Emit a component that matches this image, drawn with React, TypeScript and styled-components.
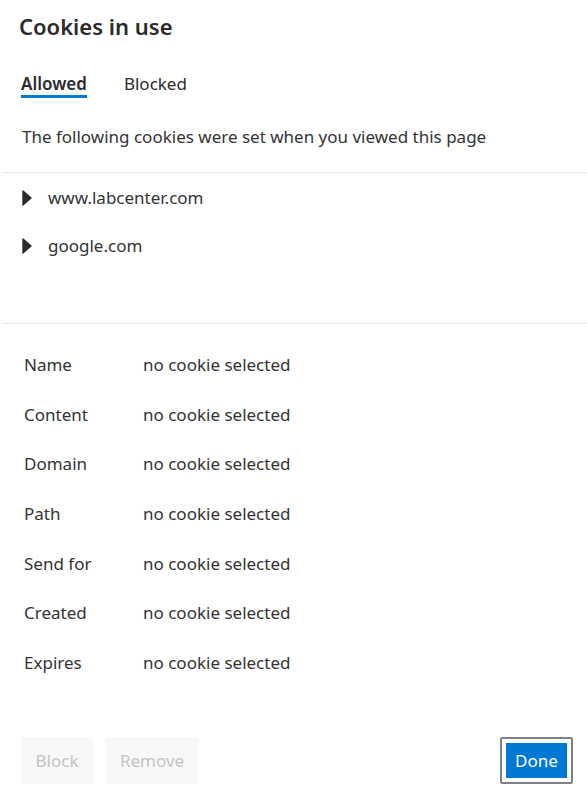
import styled, { createGlobalStyle } from 'styled-components';

const rows = ['Name', 'Content', 'Domain', 'Path', 'Send for', 'Created', 'Expires'];
const sites = ['www.labcenter.com', 'google.com'];

const GlobalStyle = createGlobalStyle`
    body {
        margin: 0;
        background: #ffffff;
        font-family: 'Noto Sans', 'Open Sans', sans-serif;
        color: #333333;
    }
`;

const App = () => {
    return (
        <Dialog>
            <GlobalStyle />
            <Title>Cookies in use</Title>
            <Tabs>
                <Tab $active>Allowed</Tab>
                <Tab>Blocked</Tab>
            </Tabs>
            <Description>
                The following cookies were set when you viewed this page
            </Description>
            <Divider />
            <Tree>
                {sites.map((site) => (
                    <TreeItem key={site}>
                        <Caret viewBox="0 0 10 16">
                            <path
                                d="M1 1 L9 8 L1 15 Z"
                                fill="#2b2b2b"
                                stroke="#2b2b2b"
                                strokeWidth="1.4"
                                strokeLinejoin="round"
                            />
                        </Caret>
                        {site}
                    </TreeItem>
                ))}
            </Tree>
            <Divider />
            <Details>
                {rows.map((row) => (
                    <DetailRow key={row}>
                        <Label>{row}</Label>
                        <Value>no cookie selected</Value>
                    </DetailRow>
                ))}
            </Details>
            <Footer>
                <ButtonGroup>
                    <GhostButton disabled $width={72}>
                        Block
                    </GhostButton>
                    <GhostButton disabled $width={92}>
                        Remove
                    </GhostButton>
                </ButtonGroup>
                <FocusRing>
                    <PrimaryButton>Done</PrimaryButton>
                </FocusRing>
            </Footer>
        </Dialog>
    );
};

interface TabProps {
    $active?: boolean;
}

interface GhostButtonProps {
    $width: number;
}

const Dialog = styled.div`
    display: flex;
    flex-direction: column;
    width: 587px;
    height: 807px;
    box-sizing: border-box;
`;

const Title = styled.div`
    font-size: 22px;
    font-weight: 600;
    line-height: 30px;
    color: #2b2b2b;
    padding: 11px 0 1px 19px;
`;

const Tabs = styled.div`
    display: flex;
    gap: 37px;
    padding: 31px 0 0 21px;
`;

const Tab = styled.div<TabProps>`
    font-size: 17px;
    font-weight: ${(props) => (props.$active ? 600 : 400)};
    color: #2b2b2b;
    line-height: 22px;
    border-bottom: 3px solid
        ${(props) => (props.$active ? '#0078d4' : 'transparent')};
`;

const Description = styled.div`
    font-size: 17px;
    line-height: 22px;
    padding: 28px 0 0 22px;
    height: 46px;
`;

const Divider = styled.div`
    height: 1px;
    margin-left: 3px;
    background: #e5e5e5;
`;

const Tree = styled.div`
    display: flex;
    flex-direction: column;
    gap: 26px;
    padding: 14px 0 0 22px;
    height: 150px;
    box-sizing: border-box;
`;

const TreeItem = styled.div`
    display: flex;
    align-items: center;
    font-size: 17px;
    line-height: 22px;
`;

const Caret = styled.svg`
    width: 10px;
    height: 16px;
    margin-right: 16px;
`;

const Details = styled.div`
    display: flex;
    flex-direction: column;
    gap: 27.67px;
    padding: 30px 0 0 24px;
    height: 413px;
    box-sizing: border-box;
`;

const DetailRow = styled.div`
    display: flex;
    font-size: 17px;
    line-height: 22px;
`;

const Label = styled.div`
    width: 119px;
`;

const Value = styled.div``;

const Footer = styled.div`
    display: flex;
    justify-content: space-between;
    align-items: center;
    padding: 0 14px 0 21px;
`;

const ButtonGroup = styled.div`
    display: flex;
    gap: 13px;
`;

const GhostButton = styled.button<GhostButtonProps>`
    width: ${(props) => props.$width}px;
    height: 47px;
    padding: 0;
    border: none;
    border-radius: 2px;
    background: #f8f8f8;
    color: #c4c4c4;
    font-family: inherit;
    font-size: 17px;
`;

const FocusRing = styled.div`
    display: flex;
    padding: 4px;
    border: 2px solid #808080;
    border-radius: 2px;
`;

const PrimaryButton = styled.button`
    width: 61px;
    height: 35px;
    padding: 0;
    border: none;
    background: #0078d4;
    color: #ffffff;
    font-family: inherit;
    font-size: 17px;
`;

export default App;
